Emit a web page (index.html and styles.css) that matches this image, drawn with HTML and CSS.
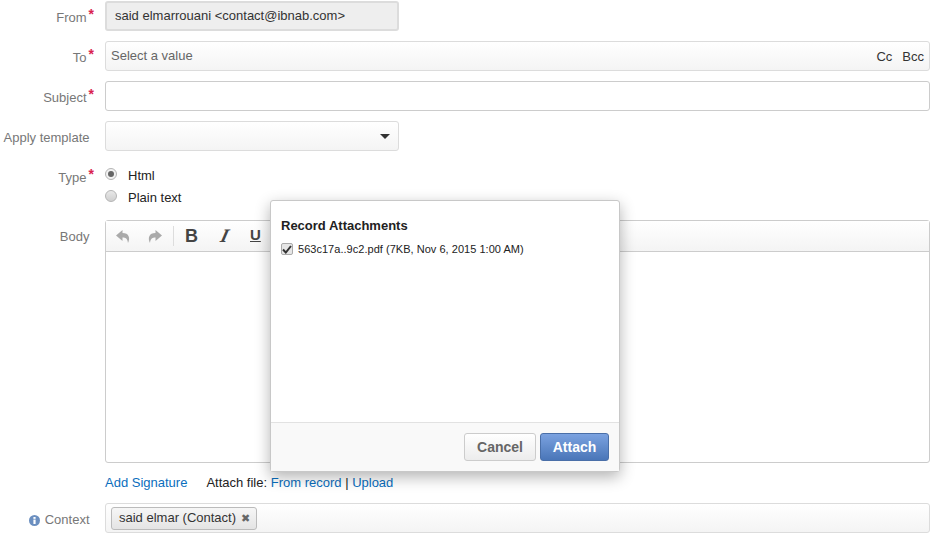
FILE: index.html
```html
<!DOCTYPE html>
<html lang="en">
<head>
<meta charset="utf-8">
<title>Send email</title>
<link rel="stylesheet" href="styles.css">
</head>
<body>
<form class="form">
  <div class="row">
    <label class="label">From<span class="req">*</span></label>
    <div class="field half readonly">said elmarrouani &lt;contact@ibnab.com&gt;</div>
  </div>
  <div class="row">
    <label class="label">To<span class="req">*</span></label>
    <div class="field select2"><span class="placeholder">Select a value</span><span class="cc"><span>Cc</span><span>Bcc</span></span></div>
  </div>
  <div class="row">
    <label class="label">Subject<span class="req">*</span></label>
    <div class="field plain"></div>
  </div>
  <div class="row">
    <label class="label nostar">Apply template</label>
    <div class="field half select2 caret-field"><span class="caret"></span></div>
  </div>
  <div class="row type-row">
    <label class="label type-label">Type<span class="req">*</span></label>
    <div class="radios">
      <div class="radio-line"><span class="radio on"></span><span>Html</span></div>
      <div class="radio-line"><span class="radio"></span><span>Plain text</span></div>
    </div>
  </div>
  <div class="row body-row">
    <label class="label nostar body-label">Body</label>
    <div class="editor">
      <div class="toolbar">
        <svg class="tool" width="16" height="15" viewBox="0 0 16 15"><path fill="#aaa" d="M7.500 1 1 6.500 7.500 12V8.500c3 0 5 1 5.500 5.500 2.500-5 1-10-5.500-10z"/></svg>
        <svg class="tool" width="16" height="15" viewBox="0 0 16 15"><path fill="#aaa" d="M8.500 1 15 6.500 8.500 12V8.500c-3 0-5 1-5.500 5.500-2.500-5-1-10 5.500-10z"/></svg>
        <span class="sep"></span>
        <b class="glyph bold">B</b>
        <i class="glyph ital">I</i>
        <span class="glyph under">U</span>
      </div>
    </div>
  </div>
  <div class="links">
    <a class="link">Add Signature</a>
    <span class="attach">Attach file: <a class="link">From record</a> | <a class="link">Upload</a></span>
  </div>
  <div class="row context-row">
    <label class="label nostar context-label"><svg width="11" height="11" viewBox="0 0 12 12"><circle cx="6" cy="6" r="6" fill="#6b8fc0"/><rect x="4.800" y="5" width="2.400" height="4.800" fill="#fff"/><rect x="4.800" y="2.200" width="2.400" height="2" fill="#fff"/></svg>Context</label>
    <div class="field select2 context-field">
      <span class="tag">said elmar (Contact) <span class="tag-x">✖</span></span>
    </div>
  </div>
</form>
<div class="modal">
  <div class="modal-body">
    <h3 class="modal-title">Record Attachments</h3>
    <div class="file">
      <span class="check"><svg width="10" height="9" viewBox="0 0 10 9"><path fill="none" stroke="#333" stroke-width="2" d="M1 4.500 3.800 7.500 9 1"/></svg></span>
      <span>563c17a..9c2.pdf (7KB, Nov 6, 2015 1:00 AM)</span>
    </div>
  </div>
  <div class="modal-foot">
    <button type="button" class="btn cancel">Cancel</button>
    <button type="button" class="btn attach-btn">Attach</button>
  </div>
</div>
</body>
</html>
```

FILE: styles.css
```css
html, body { margin: 0; padding: 0; height: 540px; overflow: hidden; background: #fff; }
body { font-family: "Liberation Sans", Arial, sans-serif; font-size: 13px; color: #333; }
.form { padding: 1px 10px 0 0; width: 930px; }
.row { display: flex; align-items: flex-start; margin-bottom: 10px; }
.label { width: 92px; margin-right: 13px; flex: none; text-align: right; color: #777; line-height: 33px; height: 30px; white-space: nowrap; }
.label.nostar { width: 89.500px; margin-right: 15.500px; }
.req { color: #d9234f; font-size: 14px; font-weight: 700; position: relative; top: -3px; left: 2px; }
.field { box-sizing: border-box; height: 30px; flex: 1; border: 1px solid #dcdcdc; border-radius: 3px; line-height: 28px; padding: 0 5px; display: flex; align-items: center; }
.half { flex: none; width: 294px; }
.readonly { background: #eee; border: 2px solid #dcdcdc; padding: 0 8px; color: #333; line-height: 26px; }
.select2 { background: linear-gradient(#fff, #f4f4f4); justify-content: space-between; }
.placeholder { color: #666; }
.cc { display: flex; gap: 10px; color: #333; position: relative; top: 1px; }
.plain { background: #fff; border-color: #ccc; }
.caret-field { justify-content: flex-end; padding-right: 8px; }
.caret { width: 0; height: 0; border-left: 5px solid transparent; border-right: 5px solid transparent; border-top: 5px solid #333; }
.type-row { margin-bottom: 0; height: 59px; }
.radios { padding-top: 3px; color: #222; }
.radio-line { display: flex; align-items: center; gap: 11px; height: 22px; }
.radio { box-sizing: border-box; width: 12px; height: 12px; border-radius: 50%; border: 1px solid #b5b5b5; background: linear-gradient(#e8e8e8, #cfcfcf); display: flex; align-items: center; justify-content: center; position: relative; top: -1px; }
.radio.on { background: #f2f2f2; }
.radio.on::after { content: ""; width: 6px; height: 6px; border-radius: 50%; background: #666; }
.body-row { margin-bottom: 0; height: 243px; }
.body-label { line-height: 33px; }
.editor { box-sizing: border-box; flex: 1; height: 243px; border: 1px solid #ccc; border-radius: 3px; background: #fff; }
.toolbar { box-sizing: border-box; height: 31px; border-bottom: 1px solid #ccc; background: linear-gradient(#fff, #f4f4f4); display: flex; align-items: center; padding-left: 9px; }
.tool { margin-right: 16px; flex: none; }
.sep { width: 1px; height: 20px; background: #ddd; margin: 0 11px 0 -6px; }
.glyph { font-size: 18px; color: #444; width: 32px; text-align: left; box-sizing: border-box; line-height: 20px; }
.bold { font-weight: 700; }
.ital { display: inline-block; font-weight: 700; font-size: 19px; font-family: "Liberation Serif", serif; padding-left: 4px; transform: skewX(-14deg); transform-origin: 8px 10px; }
.under { text-decoration: underline; font-size: 15px; font-weight: 700; margin-left: 1px; margin-top: -3px; }
.links { margin: 11px 0 0 105px; height: 19px; line-height: 17px; color: #222; display: flex; gap: 19px; }
.link { color: #0a6ebd; }
.context-row { margin: 10px 0 0; }
.context-label { color: #777; display: flex; justify-content: flex-end; align-items: center; gap: 5px; line-height: 30px; padding-top: 2px; }
.context-field { justify-content: flex-start; }
.tag { box-sizing: border-box; height: 23px; line-height: 20px; border: 1px solid #bbb; border-radius: 3px; background: linear-gradient(#f6f6f6, #e4e4e4); padding: 0 6px 0 7px; color: #333; }
.tag-x { font-size: 11px; color: #666; margin-left: 1px; }
.modal { position: absolute; left: 270px; top: 200px; width: 350px; height: 272px; box-sizing: border-box; background: #fff; border: 1px solid #c8c8c8; border-radius: 3px; box-shadow: 0 5px 15px rgba(0, 0, 0, .3); display: flex; flex-direction: column; }
.modal-body { flex: 1; padding: 17px 10px 0; }
.modal-title { margin: 0 0 9px; font-size: 13px; line-height: 15px; font-weight: 700; color: #222; }
.file { display: flex; align-items: center; gap: 5px; font-size: 11px; color: #222; line-height: 14px; letter-spacing: .03px; }
.check { box-sizing: border-box; width: 12px; height: 12px; border: 1px solid #aaa; border-radius: 2px; background: #e6e6e6; display: flex; align-items: center; justify-content: center; }
.modal-foot { box-sizing: border-box; height: 49px; background: #f9f9f9; border-top: 1px solid #e2e2e2; display: flex; justify-content: flex-end; align-items: center; gap: 4px; padding: 0 10px 0 0; }
.btn { box-sizing: border-box; height: 28px; border-radius: 3px; font: 700 14px "Liberation Sans", Arial, sans-serif; padding: 0; }
.cancel { width: 72px; border: 1px solid #ccc; background: linear-gradient(#fff, #ececec); color: #666; }
.attach-btn { width: 69px; border: 1px solid #4a6fa8; background: linear-gradient(#7ba2e0, #4a76b8); color: #fff; }
```
